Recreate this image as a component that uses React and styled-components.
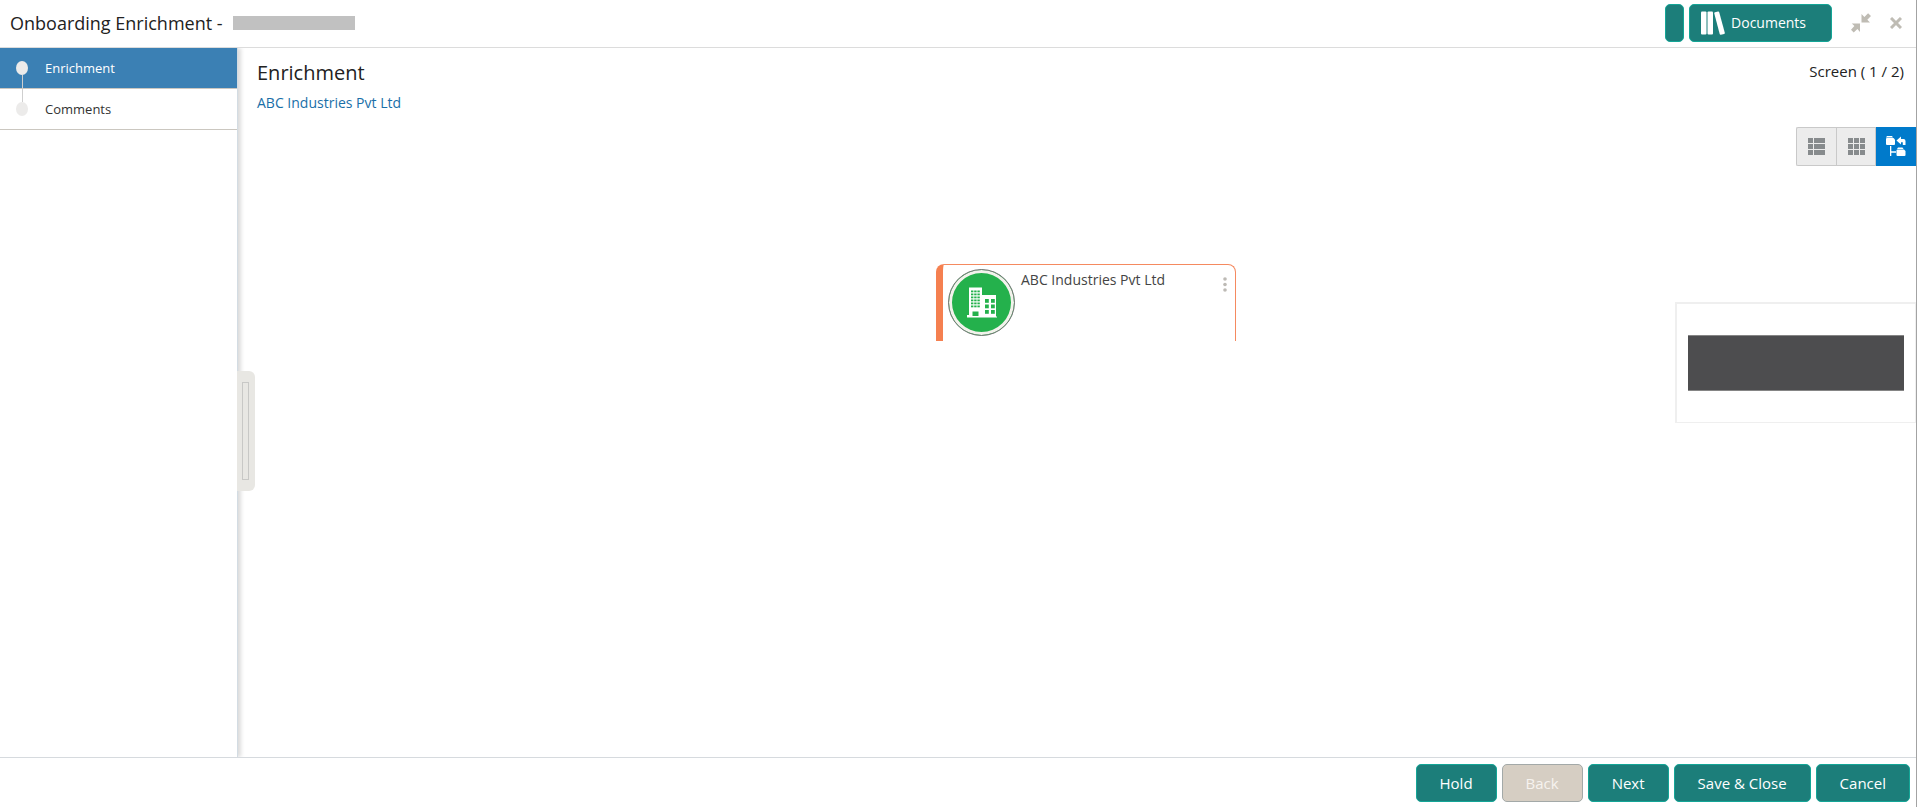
import React, { useState } from 'react'
import styled, { createGlobalStyle } from 'styled-components'

const steps = [
  { id: 1, title: 'Enrichment' },
  { id: 2, title: 'Comments' },
]

const views = [
  { id: 'list', label: 'List view', icon: <ListIcon /> },
  { id: 'grid', label: 'Grid view', icon: <GridIcon /> },
  { id: 'tree', label: 'Tree view', icon: <TreeIcon /> },
]

function App() {
  const [step, setStep] = useState(1)
  const [view, setView] = useState('tree')

  return (
    <PageStyled>
      <GlobalStyle />
      <HeaderStyled>
        <h1>Onboarding Enrichment -</h1>
        <MaskedId />
        <HeaderActions>
          <SlimButton type="button" aria-label="Details" />
          <DocumentsButton type="button">
            <BooksIcon />
            Documents
          </DocumentsButton>
          <IconButton type="button" aria-label="Collapse">
            <CollapseIcon />
          </IconButton>
          <IconButton type="button" aria-label="Close">
            <CloseIcon />
          </IconButton>
        </HeaderActions>
      </HeaderStyled>

      <BodyStyled>
        <SidebarStyled>
          <StepList>
            {steps.map((item) => (
              <li key={item.id}>
                <StepButton
                  type="button"
                  $active={step === item.id}
                  onClick={() => setStep(item.id)}
                >
                  <StepMarker $first={item.id === 1} />
                  {item.title}
                </StepButton>
              </li>
            ))}
          </StepList>
          <SplitterHandle type="button" aria-label="Toggle panel">
            <span />
          </SplitterHandle>
        </SidebarStyled>

        <ContentStyled>
          <ContentHeader>
            <div>
              <h2>Enrichment</h2>
              <a href="#customer">ABC Industries Pvt Ltd</a>
            </div>
            <p>Screen ( 1 / 2)</p>
          </ContentHeader>
          <ViewSwitch>
            {views.map((item) => (
              <ViewButton
                key={item.id}
                type="button"
                aria-label={item.label}
                $active={view === item.id}
                onClick={() => setView(item.id)}
              >
                {item.icon}
              </ViewButton>
            ))}
          </ViewSwitch>
          <CanvasStyled>
            <NodeCard>
              <NodeAvatar>
                <BuildingIcon />
              </NodeAvatar>
              <h3>ABC Industries Pvt Ltd</h3>
              <MoreButton type="button" aria-label="More actions">
                <MoreIcon />
              </MoreButton>
            </NodeCard>
            <MiniMap>
              <div />
            </MiniMap>
          </CanvasStyled>
        </ContentStyled>
      </BodyStyled>

      <FooterStyled>
        <ActionButton type="button">Hold</ActionButton>
        <ActionButton type="button" disabled>Back</ActionButton>
        <ActionButton type="button">Next</ActionButton>
        <ActionButton type="button">Save &amp; Close</ActionButton>
        <ActionButton type="button">Cancel</ActionButton>
      </FooterStyled>
    </PageStyled>
  )
}

function BooksIcon() {
  return (
    <svg width="24" height="24" viewBox="0 0 24 24" fill="#fff">
      <rect x="0" y="0.5" width="5.500" height="23" rx="1" />
      <rect x="6.500" y="0.5" width="5.500" height="23" rx="1" />
      <path d="M14 1.300l3-.8a1 1 0 0 1 1.200.7l5.600 20.500a1 1 0 0 1-.7 1.200l-3.200.8a1 1 0 0 1-1.200-.7L13.300 2.500a1 1 0 0 1 .7-1.200z" />
    </svg>
  )
}

function CollapseIcon() {
  return (
    <svg width="20" height="20" viewBox="0 0 20 20" fill="#bfbcb4">
      <path d="M10.500 1v8.500H19l-2.700-2.700L20 3.100 17.100.3 13.400 3.900z" />
      <path d="M9 19v-8.500H.8l2.600 2.600L0 16.700l2.700 2.800 3.700-3.600z" />
    </svg>
  )
}

function CloseIcon() {
  return (
    <svg width="12" height="12" viewBox="0 0 12 12" stroke="#bfbcb4" strokeWidth="3">
      <path d="M1 1l10 10M11 1L1 11" />
    </svg>
  )
}

function ListIcon() {
  return (
    <svg width="17" height="17" viewBox="0 0 17 17" fill="#878b8d">
      {[0, 6, 12].map((y) => (
        <g key={y}>
          <rect x="0" y={y} width="5" height="5" />
          <rect x="6" y={y} width="11" height="5" />
        </g>
      ))}
    </svg>
  )
}

function GridIcon() {
  return (
    <svg width="17" height="17" viewBox="0 0 17 17" fill="#878b8d">
      {[0, 6, 12].map((y) => (
        [0, 6, 12].map((x) => <rect key={`${x}-${y}`} x={x} y={y} width="5" height="5" />)
      ))}
    </svg>
  )
}

function TreeIcon() {
  return (
    <svg width="20" height="21" viewBox="0 0 20 21" fill="#fff">
      <path d="M1 0h5l1 1.400H0z" />
      <path d="M1 2h6.500l1.500 1.500V8a1 1 0 0 1-1 1H1a1 1 0 0 1-1-1V3a1 1 0 0 1 1-1z" />
      <path d="M12 11.500h4.500l1 1.400h-6.500z" />
      <path d="M11.500 13.500h6.500l1.500 1.500v4a1 1 0 0 1-1 1h-7a1 1 0 0 1-1-1v-4.500a1 1 0 0 1 1-1z" />
      <path d="M4 10h1.300v5.300H10v1.400H5.300V20H4z" />
      <path d="M10.500 4.500L15 .6v2.400h2.500a2 2 0 0 1 2 2V9h-2.700V6.200H15v2.300z" />
    </svg>
  )
}

function BuildingIcon() {
  return (
    <svg width="30" height="31" viewBox="0 0 30 31">
      <path d="M2 0.500h13V8h14v21.500h1V30.500H0V28h2z" fill="#fff" />
      <g fill="#24b14c">
        {[3.500, 6.500, 9.500, 12.500, 15.500, 18.500].map((y) => (
          [4, 7.200, 10.400].map((x) => <rect key={`${x}-${y}`} x={x} y={y} width="2.400" height="1.800" />)
        ))}
        {[12, 17.500, 23].map((y) => (
          [18, 24].map((x) => <rect key={`${x}-${y}`} x={x} y={y} width="3.800" height="3.800" />)
        ))}
        <rect x="5.500" y="24.500" width="6" height="4.500" />
      </g>
    </svg>
  )
}

function MoreIcon() {
  return (
    <svg width="4" height="15" viewBox="0 0 4 15" fill="#bdbab5">
      <circle cx="2" cy="2" r="1.800" />
      <circle cx="2" cy="7.500" r="1.800" />
      <circle cx="2" cy="13" r="1.800" />
    </svg>
  )
}

const GlobalStyle = createGlobalStyle`
  *{
      box-sizing: border-box;
      margin: 0;
      padding: 0;
  }
  body{
      font-family: 'Open Sans', 'Noto Sans', sans-serif;
      font-size: 15px;
      color: #222;
      background: #fff;
  }
  button{
      font: inherit;
      border: none;
      background: none;
      cursor: pointer;
  }
  svg{
      display: block;
      flex-shrink: 0;
  }
`;

const PageStyled = styled.div`
  min-height: 100vh;
  display: flex;
  flex-direction: column;
  border-right: 1px solid #a3a3a3;
`;

const HeaderStyled = styled.header`
  height: 48px;
  padding: 0 14px 2px 10px;
  display: flex;
  align-items: center;
  border-bottom: 1px solid #dcdcdc;
  h1{
      font-size: 18px;
      line-height: 24px;
      font-weight: 400;
  }
`;

const MaskedId = styled.div`
  width: 122px;
  height: 14px;
  margin-left: 10px;
  background: #c1c1c1;
`;

const HeaderActions = styled.div`
  margin-left: auto;
  display: flex;
  align-items: center;
`;

const ActionButton = styled.button`
  height: 38px;
  padding: 0 23px;
  display: flex;
  align-items: center;
  color: #fff;
  background: #1c7e7a;
  border: 1px solid #14a697;
  border-radius: 5px;
  &:disabled{
      color: #f6f3ef;
      background: #d6cec3;
      border-color: #a3a9a8;
      cursor: default;
  }
`;

const SlimButton = styled(ActionButton)`
  width: 19px;
  padding: 0;
  margin-right: 5px;
`;

const DocumentsButton = styled(ActionButton)`
  padding: 0 25px 0 11px;
  gap: 6px;
  font-size: 14px;
`;

const IconButton = styled.button`
  margin-left: 19px;
`;

const BodyStyled = styled.div`
  flex: 1;
  display: flex;
`;

const SidebarStyled = styled.aside`
  position: relative;
  width: 238px;
  flex-shrink: 0;
  border-right: 1px solid #d3dce3;
  box-shadow: 3px 0 4px rgba(0, 0, 0, 0.14);
  clip-path: inset(0 -24px 0 0);
`;

const StepList = styled.ul`
  list-style: none;
`;

const StepButton = styled.button`
  width: 100%;
  height: 41px;
  padding-left: 16px;
  display: flex;
  align-items: center;
  gap: 17px;
  font-size: 13px;
  color: ${({ $active }) => ($active ? '#fff' : '#333')};
  background: ${({ $active }) => ($active ? '#3b80b4' : '#fff')};
  border-bottom: 1px solid #cbc7c0;
`;

const StepMarker = styled.span`
  position: relative;
  width: 12px;
  height: 14px;
  border-radius: 50%;
  background: #ecebea;
  /* connector between this step and its neighbour */
  &::after{
      content: "";
      position: absolute;
      left: 6px;
      ${({ $first }) => ($first ? 'top: 14px;' : 'bottom: 14px;')}
      width: 1px;
      height: 13px;
      background: #cfcfcf;
  }
`;

const SplitterHandle = styled.button`
  position: absolute;
  left: 237px;
  top: 323px;
  width: 18px;
  height: 120px;
  padding-left: 5px;
  display: flex;
  align-items: center;
  background: #e8e7e3;
  border-radius: 0 6px 6px 0;
  span{
      width: 7px;
      height: 98px;
      border: 1px solid #c8c8c6;
  }
`;

const ContentStyled = styled.main`
  flex: 1;
  min-width: 0;
`;

const ContentHeader = styled.div`
  padding: 11px 12px 0 19px;
  display: flex;
  justify-content: space-between;
  h2{
      font-size: 20px;
      line-height: 28px;
      font-weight: 400;
  }
  a{
      display: block;
      margin-top: 4px;
      font-size: 14px;
      line-height: 24px;
      color: #1a6fa8;
      text-decoration: none;
  }
  p{
      line-height: 24px;
  }
`;

const ViewSwitch = styled.div`
  margin-top: 12px;
  display: flex;
  justify-content: flex-end;
`;

const ViewButton = styled.button`
  width: 40px;
  height: 39px;
  display: flex;
  align-items: center;
  justify-content: center;
  background: ${({ $active }) => ($active ? '#007acb' : '#ececec')};
  border: 1px solid ${({ $active }) => ($active ? '#007acb' : '#c9c9c9')};
  &:first-child{
      border-right: none;
      border-radius: 2px 0 0 2px;
  }
`;

const CanvasStyled = styled.div`
  padding-left: 18px;
  display: grid;
  grid-template-columns: 1fr 300px 1fr;
  align-items: start;
`;

const NodeCard = styled.article`
  grid-column: 2;
  height: 77px;
  margin-top: 98px;
  padding: 4px 8px 0 5px;
  display: flex;
  align-items: flex-start;
  border: 1px solid #f58a60;
  border-left: 7px solid #f58050;
  border-bottom: none;
  border-radius: 8px 8px 0 0;
  h3{
      flex: 1;
      margin-left: 6px;
      font-size: 14px;
      line-height: 22px;
      font-weight: 400;
      color: #444;
  }
`;

const NodeAvatar = styled.div`
  width: 67px;
  height: 67px;
  display: flex;
  align-items: center;
  justify-content: center;
  border: 1px solid #777;
  border-radius: 50%;
  background: #24b14c;
  box-shadow: inset 0 0 0 3px #f3f2ec;
`;

const MoreButton = styled.button`
  margin-top: 8px;
`;

const MiniMap = styled.div`
  grid-column: 3;
  justify-self: end;
  width: 241px;
  height: 121px;
  margin-top: 136px;
  padding: 31px 11px;
  border: 1px solid #efefef;
  border-top-width: 2px;
  border-left-width: 2px;
  div{
      height: 56px;
      background: #4d4d4f;
      border: solid #858585;
      border-width: 1px 0;
  }
`;

const FooterStyled = styled.footer`
  height: 50px;
  padding: 0 6px;
  display: flex;
  align-items: center;
  justify-content: flex-end;
  gap: 5px;
  border-top: 1px solid #d6dade;
`;

export default App
